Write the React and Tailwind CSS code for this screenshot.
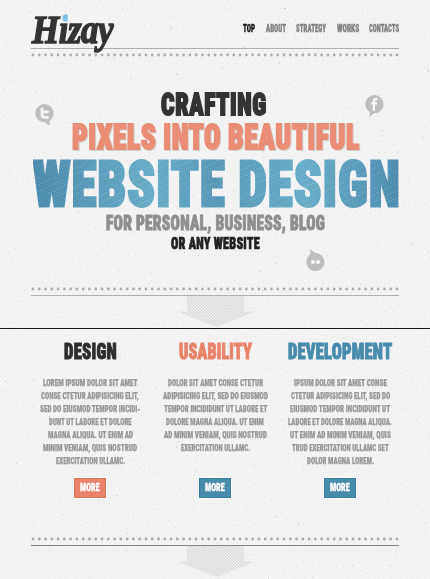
import { useLayoutEffect, useRef, useState } from "react";

// Stretches a single line of text to the exact width of its box.
function Fit({ box, text, children }) {
  const outer = useRef(null);
  const inner = useRef(null);
  const [scale, setScale] = useState(1);
  useLayoutEffect(() => {
    const measure = () => setScale(outer.current.clientWidth / inner.current.offsetWidth);
    measure();
    document.fonts?.ready.then(() => inner.current && measure());
  }, []);
  return (
    <span ref={outer} className={`block shrink-0 ${box}`}>
      <span
        ref={inner}
        className={`inline-block origin-left whitespace-nowrap align-top ${text}`}
        style={{ transform: `scaleX(${scale})` }}
      >
        {children}
      </span>
    </span>
  );
}

const nav = [
  ["TOP", "w-[12px]", "text-[#111]"],
  ["ABOUT", "w-[20px]", "text-[#808080]"],
  ["STRATEGY", "w-[30px]", "text-[#808080]"],
  ["WORKS", "w-[22px]", "text-[#808080]"],
  ["CONTACTS", "w-[30px]", "text-[#808080]"],
];

const columns = [
  {
    title: "DESIGN",
    box: "w-[53px]",
    tone: "text-[#2d2d2f]",
    button: "bg-[#e9836a] border-[#dc735b]",
    lines: [
      ["LOREM IPSUM DOLOR SIT AMET", "w-[95px]"],
      ["CONSE CTETUR ADIPISICING ELIT,", "w-[98px]"],
      ["SED DO EIUSMOD TEMPOR INCIDI-", "w-[100px]"],
      ["DUNT UT LABORE ET DOLORE", "w-[83px]"],
      ["MAGNA ALIQUA. UT ENIM AD", "w-[85px]"],
      ["MINIM VENIAM, QUIS NOSTRUD", "w-[94px]"],
      ["EXERCITATION ULLAMC.", "w-[69px]"],
    ],
  },
  {
    title: "USABILITY",
    box: "w-[73px]",
    tone: "text-[#e9836a]",
    button: "bg-[#478bad] border-[#397b9d]",
    lines: [
      ["DOLOR SIT AMET CONSE CTETUR", "w-[95px]"],
      ["ADIPISICING ELIT, SED DO EIUSMOD", "w-[105px]"],
      ["TEMPOR INCIDIDUNT UT LABORE ET", "w-[103px]"],
      ["DOLORE MAGNA ALIQUA. UT ENIM", "w-[98px]"],
      ["AD MINIM VENIAM, QUIS NOSTRUD", "w-[103px]"],
      ["EXERCITATION ULLAMC.", "w-[69px]"],
    ],
  },
  {
    title: "DEVELOPMENT",
    box: "w-[104px]",
    tone: "text-[#478bad]",
    button: "bg-[#478bad] border-[#397b9d]",
    lines: [
      ["IPSUM DOLOR SIT AMET CONSE", "w-[93px]"],
      ["CTETUR ADIPISICING ELIT, SED DO", "w-[99px]"],
      ["EIUSMOD TEMPOR INCIDIDUNT UT", "w-[100px]"],
      ["LABORE ET DOLORE MAGNA ALIQUA.", "w-[104px]"],
      ["UT ENIM AD MINIM VENIAM, QUIS", "w-[101px]"],
      ["TRUD EXERCITATION ULLAMC SET", "w-[97px]"],
      ["DOLOR MAGNA LOREM.", "w-[67px]"],
    ],
  },
];

function Paper() {
  return (
    <svg className="absolute inset-0 h-full w-full" aria-hidden="true">
      <filter id="grain" x="0" y="0" width="100%" height="100%">
        <feTurbulence type="fractalNoise" baseFrequency="0.85" numOctaves="3" seed="4" />
        <feColorMatrix values="0 0 0 0 0.3  0 0 0 0 0.3  0 0 0 0 0.3  0.24 0 0 0 -0.1" />
      </filter>
      <filter id="specks" x="0" y="0" width="100%" height="100%">
        <feTurbulence type="fractalNoise" baseFrequency="0.37" numOctaves="2" seed="11" />
        <feColorMatrix values="0 0 0 0 0.4  0 0 0 0 0.4  0 0 0 0 0.4  9 0 0 0 -6.9" />
      </filter>
      <rect width="100%" height="100%" filter="url(#grain)" />
      <rect width="100%" height="100%" filter="url(#specks)" opacity="0.5" />
    </svg>
  );
}

function Dots() {
  return (
    <svg className="block h-[4px] w-[368px]" aria-hidden="true">
      {Array.from({ length: 59 }, (_, i) => (
        <circle key={i} cx={2 + i * 6.275} cy="2" r="1.4" fill="#ababab" />
      ))}
    </svg>
  );
}

function Arrow() {
  return (
    <svg className="block h-[31px] w-[78px]" viewBox="0 0 78 31" aria-hidden="true">
      <defs>
        <pattern id="hatch" width="2.2" height="2.2" patternUnits="userSpaceOnUse" patternTransform="rotate(-45)">
          <rect width="1" height="2.2" fill="#d2d2d2" />
        </pattern>
      </defs>
      <path d="M10 0H67V15.5H78L40 31L0 15.5H10Z" fill="url(#hatch)" />
    </svg>
  );
}

function Bubble({ kind }) {
  const tails = {
    twitter: "M9 17.5L14.3 22L14.8 15Z",
    facebook: "M5 15L4.6 22L10 17.5Z",
    flickr: "M4.6 8L4.2 0L10.5 5Z",
  };
  const cy = kind === "flickr" ? 13 : 9.2;
  return (
    <svg className="block h-[22px] w-[19px]" viewBox="0 0 19 22" aria-hidden="true">
      <circle cx="9.4" cy={cy} r="9.1" fill="#c0bebd" />
      <path d={tails[kind]} fill="#c0bebd" />
      {kind === "twitter" && (
        <path d="M7 4.9V11Q7 13.4 9.6 13.4H12.6M7 7.8H12.6" fill="none" stroke="#f5f5f5" strokeWidth="2.7" strokeLinecap="round" strokeLinejoin="round" />
      )}
      {kind === "facebook" && (
        <path d="M8.9 15.8V6.4Q8.9 4 11 4H12.4M6.2 8.4H12" fill="none" stroke="#f8f8f8" strokeWidth="2.3" />
      )}
      {kind === "flickr" && (
        <g fill="#f8f8f8">
          <circle cx="7" cy="13" r="2" />
          <circle cx="12" cy="13" r="2" />
        </g>
      )}
    </svg>
  );
}

export default function App() {
  return (
    <div className="relative h-[579px] w-[430px] overflow-hidden bg-[#f5f5f5] font-['Roboto','Liberation_Sans_Narrow',sans-serif] font-black [font-stretch:75%]">
      <Paper />
      <div className="relative flex flex-col">
        <header className="flex h-[48px] items-start justify-between pl-[32px] pr-[31px]">
          <h1 className="pt-[7px]">
            <Fit
              box="w-[81px] h-[46px]"
              text="font-['Liberation_Serif',serif] font-bold italic text-[40px] leading-[46px] text-[#343436] [-webkit-text-stroke:1.5px_#343436] tracking-[-0.5px]"
            >
              H
              <span className="bg-[linear-gradient(#7fbfe2_0_15px,#343436_15px)] bg-clip-text text-transparent [-webkit-text-stroke:1.5px_transparent]">i</span>
              zay
            </Fit>
          </h1>
          <nav className="flex gap-[10.5px] pt-[22px]">
            {nav.map(([label, box, tone]) => (
              <a key={label}>
                <Fit box={`${box} h-[13px]`} text={`text-[10px] leading-[13px] [-webkit-text-stroke:0.3px_currentColor] ${tone}`}>{label}</Fit>
              </a>
            ))}
          </nav>
        </header>
        <div className="mx-auto h-px w-[368px] bg-[#adb0ab]" />
        <div className="mx-auto pt-[4px]"><Dots /></div>

        <section className="relative flex h-[230px] flex-col items-center pt-[33px]">
          <div className="pr-[2px]">
            <Fit box="w-[106px] h-[28px]" text="text-[32px] leading-[28px] tracking-[0.8px] text-[#333336] [-webkit-text-stroke:1.8px_#333336]">CRAFTING</Fit>
          </div>
          <div className="pl-px pt-[5px] drop-shadow-[1px_1px_0_#d4d0ce]">
            <Fit box="w-[288px] h-[30px]" text="text-[35px] leading-[30px] tracking-[0.8px] text-[#ea8d76] [-webkit-text-stroke:1.9px_#ea8d76]">PIXELS INTO BEAUTIFUL</Fit>
          </div>
          <div className="pl-[3px] pt-[4px]">
            <Fit
              box="w-[368px] h-[56px]"
              text="text-[63.5px] leading-[56px] tracking-[1.5px] text-transparent bg-clip-text [-webkit-text-stroke:3px_transparent] bg-[repeating-linear-gradient(45deg,#ffffff26_0_1px,transparent_1px_2.5px),linear-gradient(90deg,#4285aa,#62a9c5_32%,#4e93b5_50%,#62a9c5_74%,#4387ab)]"
            >
              WEBSITE DESIGN
            </Fit>
          </div>
          <div>
            <Fit box="w-[219px] h-[20px]" text="text-[20.5px] leading-[20px] tracking-[0.3px] text-[#8f8f8f] [-webkit-text-stroke:0.9px_#8f8f8f]">FOR PERSONAL, BUSINESS, BLOG</Fit>
          </div>
          <div className="pt-[3px]">
            <Fit box="w-[89px] h-[16px]" text="text-[16px] leading-[16px] tracking-[0.3px] text-[#222225] [-webkit-text-stroke:0.7px_#222225]">OR ANY WEBSITE</Fit>
          </div>
          <div className="absolute left-[35px] top-[47px]"><Bubble kind="twitter" /></div>
          <div className="absolute left-[365px] top-[38px]"><Bubble kind="facebook" /></div>
          <div className="absolute left-[306px] top-[192px]"><Bubble kind="flickr" /></div>
        </section>

        <div className="mx-auto"><Dots /></div>
        <div className="mx-auto mt-[4px] h-px w-[368px] bg-[#adb0ab]" />
        <div className="ml-[177px] h-[32px]"><Arrow /></div>
        <div className="h-px bg-[#151515]" />

        <section className="flex h-[208px] justify-center">
          {columns.map((c) => (
            <article key={c.title} className="flex w-[125px] flex-col items-center pt-[12px]">
              <h2>
                <Fit box={`${c.box} h-[22px]`} text={`text-[21.5px] leading-[22px] tracking-[0.3px] [-webkit-text-stroke:1px_currentColor] ${c.tone}`}>{c.title}</Fit>
              </h2>
              <div className="mt-[13px] flex h-[102px] flex-col items-center">
                {c.lines.map(([line, box]) => (
                  <Fit key={line} box={`${box} h-[12.95px]`} text="text-[9.3px] leading-[13px] text-[#989898] [-webkit-text-stroke:0.25px_#989898]">{line}</Fit>
                ))}
              </div>
              <button className={`flex h-[20px] w-[32px] items-center justify-center border outline outline-white/70 ${c.button}`}>
                <Fit box="w-[20px] h-[12px]" text="text-[11px] leading-[12px] text-white [-webkit-text-stroke:0.3px_white]">MORE</Fit>
              </button>
            </article>
          ))}
        </section>

        <div className="mx-auto"><Dots /></div>
        <div className="mx-auto mt-[4px] h-px w-[368px] bg-[#858585]" />
        <div className="ml-[177px]"><Arrow /></div>
      </div>
    </div>
  );
}
